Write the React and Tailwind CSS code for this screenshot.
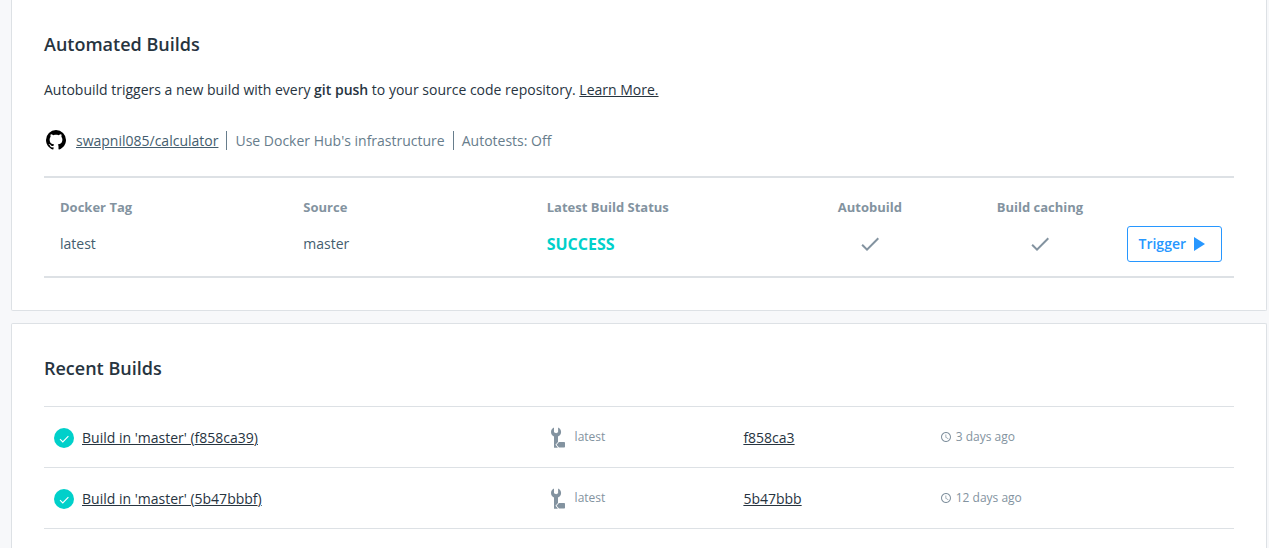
const builds = [
  { hash: "f858ca39", commit: "f858ca3", tag: "latest", age: "3 days ago" },
  { hash: "5b47bbbf", commit: "5b47bbb", tag: "latest", age: "12 days ago" },
];

function GithubIcon() {
  return (
    <svg viewBox="0 0 24 24" className="h-6 w-6 shrink-0 fill-black" aria-hidden="true">
      <path d="M12,2A10,10 0 0,0 2,12C2,16.42 4.87,20.17 8.84,21.5C9.34,21.58 9.5,21.27 9.5,21C9.5,20.77 9.5,20.14 9.5,19.31C6.73,19.91 6.14,17.97 6.14,17.97C5.68,16.81 5.03,16.5 5.03,16.5C4.12,15.88 5.1,15.9 5.1,15.9C6.1,15.97 6.63,16.93 6.63,16.93C7.5,18.45 8.97,18 9.54,17.76C9.63,17.11 9.89,16.67 10.17,16.42C7.95,16.17 5.62,15.31 5.62,11.5C5.62,10.39 6,9.5 6.65,8.79C6.55,8.54 6.2,7.5 6.75,6.15C6.75,6.15 7.59,5.88 9.5,7.17C10.29,6.95 11.15,6.84 12,6.84C12.85,6.84 13.71,6.95 14.5,7.17C16.41,5.88 17.25,6.15 17.25,6.15C17.8,7.5 17.45,8.54 17.35,8.79C18,9.5 18.38,10.39 18.38,11.5C18.38,15.32 16.04,16.16 13.81,16.41C14.17,16.72 14.5,17.33 14.5,18.26C14.5,19.6 14.5,20.68 14.5,21C14.5,21.27 14.66,21.59 15.17,21.5C19.14,20.16 22,16.42 22,12A10,10 0 0,0 12,2Z" />
    </svg>
  );
}

function CheckIcon({ className }) {
  return (
    <svg viewBox="0 0 24 24" className={className} role="img" aria-label="Enabled">
      <path d="M9 16.17L4.83 12l-1.42 1.41L9 19 21 7l-1.41-1.41z" />
    </svg>
  );
}

function PlayIcon() {
  return (
    <svg viewBox="0 0 24 24" className="h-6 w-6 fill-current" aria-hidden="true">
      <path d="M8 5v14l11-7z" />
    </svg>
  );
}

function SuccessIcon() {
  return (
    <svg viewBox="0 0 20 20" className="h-5 w-5 shrink-0" role="img" aria-label="Success">
      <circle cx="10" cy="10" r="10" fill="#00d0ca" />
      <path d="M6 11.2l2.8 2.8 5.6-5.8" fill="none" stroke="#fff" strokeWidth="1.1" />
    </svg>
  );
}

function BuildTagIcon() {
  return (
    <svg viewBox="0 0 14 21" className="h-[21px] w-[14px] shrink-0 fill-[#8393a0]" aria-hidden="true">
      <path d="M3 0.4C1.2 1.2 0 2.9 0 5c0 2 1.2 3.7 3 4.6V20.6H7V9.6C8.9 8.7 10.1 7 10.1 5c0-2.100-1.200-3.800-3-4.600V5.200L5.100 6.300 3 5.200z" />
      <path
        d="M8 15h5.200c.500 0 .800.300.800.800v4c0 .500-.300.800-.800.800H8L5.500 17.800z"
        stroke="#fff"
        strokeWidth="1.6"
      />
      <path d="M8 15h5.200c.500 0 .800.300.800.800v4c0 .500-.300.800-.800.800H8L5.500 17.800z" />
      <path d="M3 18.500L4.300 18.300 6.300 20.600H3z" />
    </svg>
  );
}

function ClockIcon() {
  return (
    <svg viewBox="0 0 24 24" className="h-3 w-3 shrink-0 fill-[#8393a0]" aria-hidden="true">
      <path d="M11.990 2C6.470 2 2 6.480 2 12s4.470 10 9.990 10C17.520 22 22 17.520 22 12S17.520 2 11.990 2zM12 20c-4.420 0-8-3.580-8-8s3.580-8 8-8 8 3.580 8 8-3.580 8-8 8zM12.500 7H11v6l5.250 3.150.750-1.230-4.500-2.670z" />
    </svg>
  );
}

function AutomatedBuilds() {
  return (
    <section className="rounded-b-xs border border-t-0 border-[#dde1e5] bg-white px-8 pt-8 pb-8">
      <h2 className="text-lg leading-6 font-semibold">Automated Builds</h2>
      <p className="mt-6 text-sm leading-5">
        Autobuild triggers a new build with every <strong className="font-semibold">git push</strong> to your
        source code repository.{" "}
        <a href="#learn-more" className="underline">
          Learn More.
        </a>
      </p>

      <div className="mt-7 flex items-center text-sm leading-[19px] text-[#677d8c]">
        <GithubIcon />
        <a href="#repository" className="ml-2 text-[#445d6e] underline">
          swapnil085/calculator
        </a>
        <span className="ml-2 border-l border-[#677d8c] pl-2">Use Docker Hub's infrastructure</span>
        <span className="ml-2 border-l border-[#677d8c] pl-2">Autotests: Off</span>
      </div>

      <div className="mt-6 border-y-2 border-[#dde1e5]">
        <table className="w-full table-fixed text-left">
          <thead>
            <tr className="text-[13px] leading-5 text-[#8393a0]">
              <th className="w-[20.45%] px-4 pt-[19px] pb-px font-bold">Docker Tag</th>
              <th className="w-[20.45%] px-4 pt-[19px] pb-px font-bold">Source</th>
              <th className="w-[21.35%] px-4 pt-[19px] pb-px font-bold">Latest Build Status</th>
              <th className="w-[14.3%] px-4 pt-[19px] pb-px text-center font-bold">Autobuild</th>
              <th className="w-[14.3%] px-4 pt-[19px] pb-px text-center font-bold">Build caching</th>
              <th aria-label="Actions" />
            </tr>
          </thead>
          <tbody>
            <tr className="text-sm leading-5 text-[#445d6e]">
              <td className="px-4 pt-2 pb-3.5">latest</td>
              <td className="px-4 pt-2 pb-3.5">master</td>
              <td className="px-4 pt-2 pb-3.5 text-base leading-5 font-bold text-[#00d0ca]">SUCCESS</td>
              <td className="px-4 pt-2 pb-3.5">
                <CheckIcon className="mx-auto h-6 w-6 fill-[#8393a0]" />
              </td>
              <td className="px-4 pt-2 pb-3.5">
                <CheckIcon className="mx-auto h-6 w-6 fill-[#8393a0]" />
              </td>
              <td className="pt-2 pr-3 pb-3.5">
                <button
                  type="button"
                  className="ml-auto flex h-9 items-center rounded-[3px] border border-[#2797ff] bg-white px-[11px] text-sm font-semibold text-[#2797ff]"
                >
                  Trigger
                  <PlayIcon />
                </button>
              </td>
            </tr>
          </tbody>
        </table>
      </div>
    </section>
  );
}

function RecentBuilds() {
  return (
    <section className="grow rounded-t-xs border border-b-0 border-[#dde1e5] bg-white px-8 pt-8">
      <h2 className="text-lg leading-6 font-semibold">Recent Builds</h2>
      <table className="mt-[26px] w-full table-fixed border-separate border-spacing-0 border-t border-[#dde1e5] text-left">
        <colgroup>
          <col className="w-[41.9%]" />
          <col className="w-[16.2%]" />
          <col className="w-[16.5%]" />
          <col />
        </colgroup>
        <tbody>
          {builds.map((build) => (
            <tr key={build.hash}>
              <td className="h-[61px] border-b border-[#dde1e5] px-2.5 pt-0.5">
                <div className="flex items-center gap-2">
                  <SuccessIcon />
                  <a href="#build" className="text-sm leading-5 underline">
                    Build in 'master' ({build.hash})
                  </a>
                </div>
              </td>
              <td className="border-b border-[#dde1e5] px-2">
                <div className="flex items-center gap-2.5 text-xs text-[#8393a0]">
                  <BuildTagIcon />
                  {build.tag}
                </div>
              </td>
              <td className="border-b border-[#dde1e5] px-2">
                <a href="#commit" className="text-sm leading-5 underline">
                  {build.commit}
                </a>
              </td>
              <td className="border-b border-[#dde1e5] px-2">
                <div className="flex items-center gap-1 text-xs text-[#8393a0]">
                  <ClockIcon />
                  {build.age}
                </div>
              </td>
            </tr>
          ))}
        </tbody>
      </table>
    </section>
  );
}

export default function App() {
  return (
    <main className="flex min-h-screen flex-col gap-3 bg-[#f7f8fa] pr-[2px] pl-[11px] font-['Open_Sans',sans-serif] text-[#27343f]">
      <AutomatedBuilds />
      <RecentBuilds />
    </main>
  );
}
